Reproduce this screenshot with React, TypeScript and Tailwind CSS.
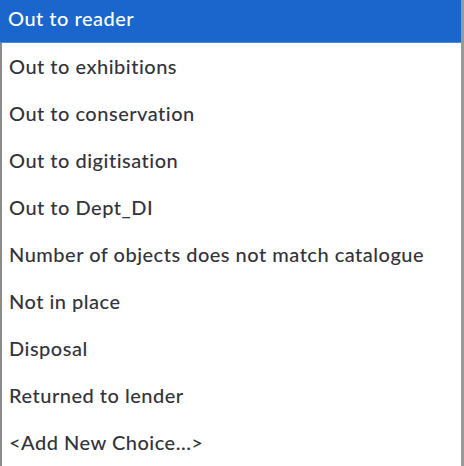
import React from "react";

const items = [
  "Out to exhibitions",
  "Out to conservation",
  "Out to digitisation",
  "Out to Dept_DI",
  "Number of objects does not match catalogue",
  "Not in place",
  "Disposal",
  "Returned to lender",
  "<Add New Choice...>",
];

export default function App() {
  return (
    <div
      className="w-[464px] h-[466px] overflow-hidden bg-white flex"
      style={{ fontFamily: "Lato, 'Noto Sans', sans-serif" }}
    >
      <div className="flex-1 flex flex-col">
        <div className="h-[43px] bg-[#1a66cc] border-b border-[#4a8be8] flex items-center pl-[8px] pb-[7px] text-white text-[20px] tracking-[0.5px] font-medium shrink-0">
          Out to reader
        </div>
        <div className="flex-1 flex flex-col border-l-2 border-[#8a8a8a]">
          {items.map((t) => (
            <div
              key={t}
              className="h-[46.9px] shrink-0 flex items-center pl-[7px] text-[20px] tracking-[0.5px] font-medium text-[#33333b]"
            >
              {t}
            </div>
          ))}
        </div>
      </div>
      <div className="w-[3px] bg-[#9a9a9a] shrink-0" />
    </div>
  );
}
